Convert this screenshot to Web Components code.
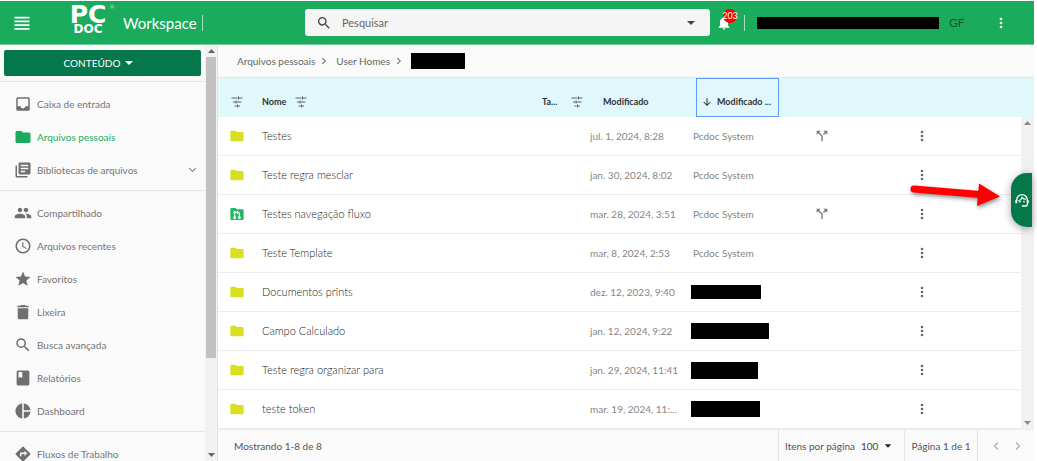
<!DOCTYPE html>
<html lang="pt-BR">
<head>
<meta charset="utf-8">
<meta name="viewport" content="width=device-width, initial-scale=1">
<title>PCDOC Workspace</title>
<style>
  html, body { margin: 0; height: 100%; }
  body {
    font-family: Lato, "Open Sans", sans-serif;
    font-size: 10px;
    font-weight: 400;
    line-height: 16px;
    color: #666;
    background: #fff;
    overflow: hidden;
  }
</style>
</head>
<body>
<workspace-app>
  <app-header slot="header" initials="GF" count="203">Workspace</app-header>
  <side-nav slot="nav">
    <nav-group>
      <nav-item icon="inbox">Caixa de entrada</nav-item>
      <nav-item icon="folder" active>Arquivos pessoais</nav-item>
      <nav-item icon="library" expandable>Bibliotecas de arquivos</nav-item>
    </nav-group>
    <nav-group>
      <nav-item icon="people">Compartilhado</nav-item>
      <nav-item icon="clock">Arquivos recentes</nav-item>
      <nav-item icon="star">Favoritos</nav-item>
      <nav-item icon="trash">Lixeira</nav-item>
      <nav-item icon="search">Busca avançada</nav-item>
      <nav-item icon="book">Relatórios</nav-item>
      <nav-item icon="pie">Dashboard</nav-item>
    </nav-group>
    <nav-group>
      <nav-item icon="directions">Fluxos de Trabalho</nav-item>
    </nav-group>
  </side-nav>
  <bread-crumbs>
    <a href="#pessoais">Arquivos pessoais</a>
    <a href="#homes">User Homes</a>
  </bread-crumbs>
  <file-table></file-table>
  <table-pager></table-pager>
  <support-tab slot="overlay"></support-tab>
  <pointer-arrow slot="overlay"></pointer-arrow>
</workspace-app>

<script>
const ICONS = {
  menu: '<path d="M3 4.500h18v2H3zM3 9h18v2H3zM3 13.500h18v2H3zM3 18h18v2H3z"/>',
  search: '<path d="M15.5 14h-.79l-.28-.27A6.47 6.47 0 0 0 16 9.5 6.5 6.5 0 1 0 9.5 16c1.61 0 3.09-.59 4.23-1.57l.27.28v.79l5 4.99L20.49 19l-4.99-5zm-6 0C7.01 14 5 11.99 5 9.5S7.01 5 9.5 5 14 7.01 14 9.5 11.99 14 9.5 14z"/>',
  caret: '<path d="M4 8h16l-8 8z"/>',
  bell: '<path d="M12 22c1.1 0 2-.9 2-2h-4c0 1.1.9 2 2 2zm6-6v-5c0-3.07-1.63-5.64-4.5-6.32V4a1.5 1.5 0 0 0-3 0v.68C7.64 5.36 6 7.92 6 11v5l-2 2v1h16v-1l-2-2z"/>',
  dots: '<path d="M12 8a2 2 0 1 0 0-4 2 2 0 0 0 0 4zm0 2a2 2 0 1 0 0 4 2 2 0 0 0 0-4zm0 6a2 2 0 1 0 0 4 2 2 0 0 0 0-4z"/>',
  inbox: '<path d="M19 3H5a2 2 0 0 0-2 2v14c0 1.1.89 2 2 2h14a2 2 0 0 0 2-2V5a2 2 0 0 0-2-2zm0 12h-4c0 1.66-1.35 3-3 3s-3-1.34-3-3H5V5h14v10z"/>',
  folder: '<path d="M10 4H4c-1.1 0-1.99.9-1.99 2L2 18c0 1.1.9 2 2 2h16c1.1 0 2-.9 2-2V8c0-1.1-.9-2-2-2h-8l-2-2z"/>',
  flow: '<path d="M10 3H4a2 2 0 0 0-2 2v14c0 1.1.9 2 2 2h16c1.1 0 2-.9 2-2V7c0-1.1-.9-2-2-2h-8z"/><g fill="none" stroke="#fff" stroke-width="1.6"><path d="M8.500 11v6M15.500 17v-5.500a2 2 0 0 0-2-2h-1.500M13.500 7.500l-2 2 2 2"/><circle cx="8.500" cy="9.500" r="1.300"/><circle cx="8.500" cy="17.500" r="1.300"/><circle cx="15.500" cy="17.500" r="1.300"/></g>',
  library: '<path d="M4 6H2v14c0 1.1.9 2 2 2h14v-2H4V6zm16-4H8c-1.1 0-2 .9-2 2v12c0 1.1.9 2 2 2h12c1.1 0 2-.9 2-2V4c0-1.1-.9-2-2-2zm-1 9H9V9h10v2zm-4 4H9v-2h6v2zm4-8H9V5h10v2z"/>',
  people: '<path d="M16 11c1.66 0 2.99-1.34 2.99-3S17.66 5 16 5s-3 1.34-3 3 1.34 3 3 3zm-8 0c1.66 0 2.99-1.34 2.99-3S9.66 5 8 5 5 6.34 5 8s1.34 3 3 3zm0 2c-2.33 0-7 1.17-7 3.5V19h14v-2.500C15 14.170 10.330 13 8 13zm8 0c-.29 0-.62.02-.97.05 1.160.840 1.970 1.970 1.970 3.450V19h6v-2.500c0-2.330-4.670-3.500-7-3.500z"/>',
  clock: '<path d="M11.990 2C6.470 2 2 6.480 2 12s4.470 10 9.990 10C17.520 22 22 17.520 22 12S17.520 2 11.990 2zM12 20a8 8 0 1 1 0-16 8 8 0 0 1 0 16zm.5-13H11v6l5.250 3.150.750-1.230-4.500-2.670z"/>',
  star: '<path d="M12 17.270 18.180 21l-1.640-7.030L22 9.240l-7.190-.610L12 2 9.190 8.630 2 9.240l5.460 4.730L5.820 21z"/>',
  trash: '<path d="M5 19.500c0 1.100.9 2 2 2h10a2 2 0 0 0 2-2V7H5zM19.500 3.500h-4l-1-1h-5l-1 1h-4v2h15z"/>',
  book: '<path d="M18.500 2h-13a2 2 0 0 0-2 2v16c0 1.100.9 2 2 2h13a2 2 0 0 0 2-2V4a2 2 0 0 0-2-2zM6 4h5v8l-2.500-1.500L6 12z"/>',
  pie: '<path d="M11 2v20c-5.070-.500-9-4.790-9-10s3.930-9.500 9-10zm2.030 0v8.990H22c-.470-4.740-4.240-8.520-8.970-8.990zm0 11.010V22c4.740-.470 8.500-4.250 8.970-8.990z"/>',
  directions: '<path d="m21.710 11.290-9-9a1 1 0 0 0-1.410 0l-9 9a1 1 0 0 0 0 1.410l9 9c.39.39 1.020.39 1.410 0l9-9a1 1 0 0 0 0-1.410zM14 14.500V12h-4v3H8v-4c0-.550.450-1 1-1h5V7.500l3.500 3.500-3.500 3.500z"/>',
  down: '<path d="m5 9 7 7 7-7" fill="none" stroke="currentColor" stroke-width="2.200"/>',
  right: '<path d="m8 5 7 7-7 7" fill="none" stroke="currentColor" stroke-width="2.500"/>',
  left: '<path d="m16 5-7 7 7 7" fill="none" stroke="currentColor" stroke-width="2.500"/>',
  sortdown: '<path d="M12 3v17M4 12l8 8 8-8" fill="none" stroke="currentColor" stroke-width="2.500"/>',
  tune: '<path d="M1 4h12M15 1v6M15 4h8M4 12h5M10 9v6M10 12h11M7 20h4M13 17v6M13 20h5" fill="none" stroke="currentColor" stroke-width="1.800"/>',
  split: '<path d="m14 4 2.290 2.290-2.880 2.880 1.420 1.420 2.880-2.880L20 10V4zm-4 0H4v6l2.290-2.290 4.710 4.700V20h2v-8.410l-5.290-5.300z"/>',
  agent: '<g fill="none" stroke="currentColor" stroke-width="2"><path d="M4 17v-5a8 8 0 0 1 16 0v7a2 2 0 0 1-2 2h-6M3 12v5M21 12v5"/><path d="M6.500 13c3-.5 5-2.500 5.500-5 1.500 2 3.500 3 6 3" stroke-width="1.600"/></g><circle cx="9" cy="14.500" r="1.200"/><circle cx="15" cy="14.500" r="1.200"/>'
};

const define = (name, html, setup) => customElements.define(name, class extends HTMLElement {
  connectedCallback() {
    if (this.shadowRoot) return;
    const t = document.createElement('template');
    t.innerHTML = typeof html === 'function' ? html(this) : html;
    this.attachShadow({ mode: 'open' }).append(t.content.cloneNode(true));
    if (setup) setup(this, this.shadowRoot);
  }
});

define('ui-icon', el => `
  <style>
    :host { display: inline-block; flex: none; width: var(--size, 16px); height: var(--size, 16px); }
    svg { display: block; width: 100%; height: 100%; fill: currentColor; }
  </style>
  <svg viewBox="0 0 24 24" aria-hidden="true">${ICONS[el.getAttribute('name')]}</svg>`);

/* Blacked-out personal data; size comes from --w and --h. */
define('redacted-box', `
  <style>:host { display: block; flex: none; width: var(--w, 70px); height: var(--h, 16px); background: #000; }</style>`);

define('scroll-rail', `
  <style>
    :host { display: flex; flex-direction: column; align-items: center; background: #f1f1f1; }
    svg { flex: none; width: 7px; height: 12px; fill: var(--arrow, #8a8a8a); }
    i { flex: 0 0 var(--thumb, 0px); align-self: stretch; margin: 0 1px; background: #c1c1c1; }
    span { flex: 1; }
  </style>
  <svg viewBox="0 0 7 12"><path d="M0 8h7L3.500 4z"/></svg><i></i><span></span>
  <svg viewBox="0 0 7 12"><path d="M0 4h7L3.500 8z"/></svg>`);

define('workspace-app', `
  <style>
    :host { display: grid; grid-template: auto minmax(0, 1fr) / 218px minmax(0, 1fr);
      height: 100vh; box-sizing: border-box; padding: 1px 3px 0 0; position: relative; }
    ::slotted([slot=header]) { grid-column: 1 / -1; }
    main { display: flex; flex-direction: column; min-width: 0; background: #fff; }
  </style>
  <slot name="header"></slot>
  <slot name="nav"></slot>
  <main><slot></slot></main>
  <slot name="overlay"></slot>`);

define('app-header', el => `
  <style>
    :host { display: flex; align-items: center; height: 43px; background: #1aab5d; color: #fff; border-bottom: 1px solid #78cda0; }
    button { border: 0; padding: 0; background: none; color: inherit; font: inherit; display: flex; }
    .brand { flex: 0 0 305px; display: flex; align-items: center; box-sizing: border-box; padding-left: 12px; }
    .logo { display: flex; flex-direction: column; align-items: center; width: 48px; margin: 0 11px 0 32px; padding-bottom: 6px;
      font-family: "DejaVu Sans", sans-serif; font-weight: 700; position: relative; }
    .pc { font-size: 25px; line-height: 19px; }
    .doc { font-size: 12px; line-height: 11px; }
    .reg { position: absolute; right: -3px; top: -2px; font-size: 6px; line-height: 8px; font-weight: 400; color: #a3ddbe; }
    .title { font-size: 15px; }
    .rule { width: 1px; height: 16px; background: #a3ddbe; margin-left: 5px; }
    form { flex: 1; display: flex; align-items: center; height: 27px; background: #f5f5f5; border-radius: 3px; color: #444;
      padding: 0 13px 0 11px; box-sizing: border-box; min-width: 0; }
    input { flex: 1; min-width: 0; border: 0; background: none; outline: 0; font: inherit; font-size: 11px; color: #555; padding: 0; margin-left: 10px; }
    input::placeholder { color: #666; opacity: 1; }
    .tools { flex: 0 0 324px; display: flex; align-items: center; }
    .bell { position: relative; margin-left: 6px; }
    .badge { position: absolute; left: 7px; top: -6px; width: 14px; height: 14px; border-radius: 50%; background: #f00;
      font-size: 9px; line-height: 14px; display: flex; justify-content: center; }
    .tools .rule { margin-left: 12px; }
    redacted-box { --w: 182px; --h: 12px; margin-left: 12px; }
    .user { color: #14502f; margin-left: 10px; font-size: 12px; }
    .more { margin-left: 28px; }
  </style>
  <div class="brand">
    <button aria-label="Menu"><ui-icon name="menu" style="--size:20px"></ui-icon></button>
    <div class="logo"><span class="pc">PC</span><span class="doc">DOC</span><span class="reg">®</span></div>
    <span class="title"><slot></slot></span><span class="rule"></span>
  </div>
  <form role="search">
    <ui-icon name="search"></ui-icon>
    <input type="search" aria-label="Pesquisar" placeholder="Pesquisar">
    <button type="button" aria-label="Opções"><ui-icon name="caret" style="--size:12px"></ui-icon></button>
  </form>
  <div class="tools">
    <button class="bell" aria-label="Notificações"><ui-icon name="bell"></ui-icon><span class="badge">${el.getAttribute('count')}</span></button>
    <span class="rule"></span>
    <redacted-box></redacted-box>
    <span class="user">${el.getAttribute('initials')}</span>
    <button class="more" aria-label="Mais"><ui-icon name="dots"></ui-icon></button>
  </div>`);

define('side-nav', `
  <style>
    :host { display: grid; grid-template-columns: minmax(0, 1fr) 12px; background: #fafafa; border-right: 1px solid #e4e4e4;
      min-height: 0; overflow: hidden; }
    .list { overflow: hidden; }
    button { display: flex; align-items: center; justify-content: center; gap: 3px; width: calc(100% - 8px); height: 26px;
      margin: 5px 4px; padding: 0 10px 0 4px; border: 0; border-radius: 2px; background: #04784a; color: #fff; font: inherit; }
    scroll-rail { --thumb: 301px; min-height: 0; --arrow: #666; }
  </style>
  <div class="list"><button>CONTEÚDO <ui-icon name="caret" style="--size:12px"></ui-icon></button><slot></slot></div>
  <scroll-rail></scroll-rail>`);

define('nav-group', `
  <style>:host { display: block; border-top: 1px solid #e4e4e4; padding: 5px 0 4px; }</style>
  <slot></slot>`);

define('nav-item', el => `
  <style>
    :host { display: block; color: #757575; }
    :host([active]) { color: #1aab5d; }
    a { display: flex; align-items: center; gap: 5px; height: 33px; padding: 0 7px 0 14px; color: inherit; text-decoration: none; }
    span { flex: 1; white-space: nowrap; }
    .main { --size: 18px; color: #6f6f6f; }
    :host([active]) .main { color: inherit; }
  </style>
  <a href="#${el.getAttribute('icon')}"><ui-icon class="main" name="${el.getAttribute('icon')}"></ui-icon><span><slot></slot></span>
  ${el.hasAttribute('expandable') ? '<ui-icon name="down" style="--size:11px"></ui-icon>' : ''}</a>`);

define('bread-crumbs', `
  <style>
    :host { display: block; background: #fafafa; border-bottom: 1px solid #e6e6e6; }
    nav { display: flex; align-items: center; height: 32px; padding-left: 19px; }
    ::slotted(a) { color: #666; text-decoration: none; }
    ui-icon { --size: 10px; margin: 0 7px 0 4px; }
    redacted-box { --w: 54px; }
  </style>
  <nav aria-label="Caminho"><slot name="0"></slot><ui-icon name="right"></ui-icon><slot name="1"></slot><ui-icon name="right"></ui-icon><redacted-box></redacted-box></nav>`,
  el => [...el.children].forEach((a, i) => { a.slot = String(i); }));

const FILES = [
  ['Testes', 'jul. 1, 2024, 8:28', 'Pcdoc System', true],
  ['Teste regra mesclar', 'jan. 30, 2024, 8:02', 'Pcdoc System'],
  ['Testes navegação fluxo', 'mar. 28, 2024, 3:51', 'Pcdoc System', true, 'flow'],
  ['Teste Template', 'mar. 8, 2024, 2:53', 'Pcdoc System'],
  ['Documentos prints', 'dez. 12, 2023, 9:40', [70, 14]],
  ['Campo Calculado', 'jan. 12, 2024, 9:22', [78, 16]],
  ['Teste regra organizar para', 'jan. 29, 2024, 11:41', [67, 17]],
  ['teste token', 'mar. 19, 2024, 11:...', [69, 16]]
];

const fileRow = ([name, date, user, shared, kind]) => `
  <tr>
    <td class="kind ${kind || ''}"><ui-icon name="${kind || 'folder'}"></ui-icon></td>
    <td class="name">${name}</td>
    <td></td>
    <td>${date}</td>
    <td class="user">${Array.isArray(user) ? `<redacted-box style="--w:${user[0]}px;--h:${user[1]}px"></redacted-box>` : user}</td>
    <td class="share">${shared ? '<ui-icon name="split"></ui-icon>' : ''}</td>
    <td class="act"><button aria-label="Ações"><ui-icon name="dots"></ui-icon></button></td>
  </tr>`;

define('file-table', `
  <style>
    :host { display: grid; grid-template-columns: minmax(0, 1fr) 13px; }
    table { width: 100%; table-layout: fixed; border-collapse: separate; border-spacing: 0; }
    th, td { padding: 0; height: 39px; box-sizing: border-box; text-align: left; white-space: nowrap; overflow: hidden; }
    td { border-bottom: 1px solid #ececec; color: #858585; }
    th { background: #e0f8fc; color: #333; font-size: 9px; font-weight: 700; }
    .side { display: flex; flex-direction: column; }
    .side::before { content: ""; height: 39px; background: #e0f8fc; }
    scroll-rail { flex: 1; }
    .head { display: flex; align-items: center; box-sizing: border-box; height: 39px; padding-top: 8px; gap: 9px; }
    .tune { --size: 12px; color: #555; }
    .kind, .first { padding-left: 11px; }
    .kind { color: #d9e021; }
    .kind.flow { color: #22b866; }
    .first .head { padding-left: 2px; }
    ui-icon { display: block; }
    .name { color: #222; font-size: 11px; font-weight: 300; }
    .date { padding-left: 13px; }
    .user { padding-left: 7px; }
    .user redacted-box { margin-left: -2px; }
    .sorted { padding-left: 10px; }
    button { border: 0; padding: 0; background: none; color: #666; font: inherit; display: block; }
    .sorted button { display: flex; align-items: center; gap: 5px; width: 100%; height: 39px; padding: 8px 0 0 5px; box-sizing: border-box;
      border: 1px solid #5b9bf5; color: #333; }
    .share ui-icon { margin: 0 auto; color: #757575; }
    .act button { margin-left: 50px; }
  </style>
  <table>
    <colgroup><col style="width:44px"><col><col style="width:48px"><col style="width:96px"><col style="width:93px"><col style="width:85px"><col style="width:157px"></colgroup>
    <thead><tr>
      <th class="first"><div class="head"><ui-icon class="tune" name="tune"></ui-icon></div></th>
      <th><div class="head">Nome<ui-icon class="tune" name="tune"></ui-icon></div></th>
      <th><div class="head" style="gap:14px">Ta...<ui-icon class="tune" name="tune"></ui-icon></div></th>
      <th class="date"><div class="head">Modificado</div></th>
      <th class="sorted" aria-sort="descending"><button><ui-icon name="sortdown" style="--size:10px"></ui-icon>Modificado ...</button></th>
      <th></th><th></th>
    </tr></thead>
    <tbody>${FILES.map(fileRow).join('')}</tbody>
  </table>
  <div class="side"><scroll-rail></scroll-rail></div>`);

define('table-pager', `
  <style>
    :host { display: flex; flex: 1; min-height: 32px; box-sizing: border-box; background: #fafafa; border-top: 1px solid #ececec; color: #555; }
    .total { flex: 1; padding-left: 16px; }
    div { display: flex; align-items: center; box-sizing: border-box; white-space: nowrap; }
    .size, .page, .step { border-left: 1px solid #e4e4e4; }
    .size { width: 126px; padding-left: 6px; }
    label { flex: 1; }
    select { appearance: none; border: 0; background: none; font: inherit; color: #444; padding: 0; margin: 0 4px; }
    .size ui-icon { --size: 10px; margin-right: 11px; color: #222; }
    .page { width: 73px; justify-content: center; }
    .step { width: 57px; padding-left: 12px; gap: 10px; }
    button { border: 0; padding: 0; background: none; color: #b0b0b0; display: flex; }
    .step ui-icon { --size: 12px; }
  </style>
  <div class="total">Mostrando 1-8 de 8</div>
  <div class="size"><label for="n">Itens por página</label><select id="n"><option>100</option></select><ui-icon name="caret"></ui-icon></div>
  <div class="page">Página 1 de 1</div>
  <div class="step"><button aria-label="Anterior"><ui-icon name="left"></ui-icon></button><button aria-label="Próxima"><ui-icon name="right"></ui-icon></button></div>`);

define('support-tab', `
  <style>
    :host { position: absolute; right: 5px; top: 173px; }
    button { display: flex; align-items: center; justify-content: center; width: 21px; height: 54px; padding: 0; border: 0;
      border-radius: 16px 0 0 16px; background: #04784a; color: #fff; box-shadow: 0 2px 8px rgba(0, 0, 0, .35); }
  </style>
  <button aria-label="Suporte"><ui-icon name="agent"></ui-icon></button>`);

define('pointer-arrow', `
  <style>
    :host { position: absolute; right: 35px; top: 180px; width: 94px; height: 30px; pointer-events: none; }
    svg { display: block; filter: drop-shadow(1px 2px 2px rgba(0, 0, 0, .45)); overflow: visible; }
  </style>
  <svg width="94" height="30" viewBox="0 0 94 30"><path d="M6 9 72 14.500" stroke="#f00" stroke-width="7" stroke-linecap="round"/><path d="M71 3.500 92 16.500 69 26z" fill="#f00"/></svg>`);
</script>
</body>
</html>
